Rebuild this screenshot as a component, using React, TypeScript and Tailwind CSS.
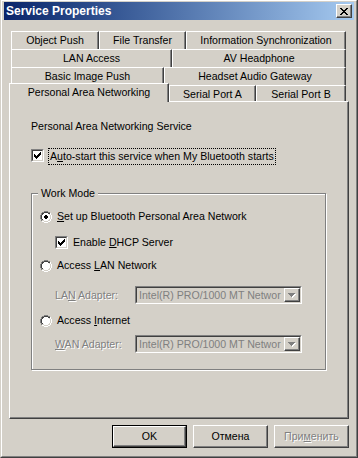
import React from "react";

function pix(pattern: string[], ch: string) {
  let d = "";
  pattern.forEach((row, y) => {
    for (let x = 0; x < row.length; x++) {
      if (row[x] === ch) d += `M${x} ${y}h1v1h-1z`;
    }
  });
  return d;
}

const CHECK = [
  "......X",
  ".....XX",
  "X...XXX",
  "XX.XXX.",
  "XXXXX..",
  ".XXX...",
  "..X....",
];

const CLOSE = [
  "XX....XX",
  ".XX..XX.",
  "..XXXX..",
  "...XX...",
  "..XXXX..",
  ".XX..XX.",
  "XX....XX",
];

const ARROW = ["XXXXXXX", ".XXXXX.", "..XXX..", "...X..."];

const RADIO = [
  "....GGGG....",
  "..GGDDDDGG..",
  ".GDDWWWWDDH.",
  ".GDWWWWWWLH.",
  "GDWWWWWWWWLH",
  "GDWWWWWWWWLH",
  "GDWWWWWWWWLH",
  "GDWWWWWWWWLH",
  ".GDWWWWWWLH.",
  ".GLLWWWWLLH.",
  "..HHLLLLHH..",
  "....HHHH....",
];

const DOT = ["....", ".XX.", "XXXX", "XXXX", ".XX."];

function Radio({ checked }: { checked?: boolean }) {
  return (
    <svg width="12" height="12" viewBox="0 0 12 12" shapeRendering="crispEdges" className="shrink-0 block">
      <path d={pix(RADIO, "G")} fill="#808080" />
      <path d={pix(RADIO, "D")} fill="#404040" />
      <path d={pix(RADIO, "W")} fill="#ffffff" />
      <path d={pix(RADIO, "L")} fill="#D4D0C8" />
      <path d={pix(RADIO, "H")} fill="#ffffff" />
      {checked && (
        <g transform="translate(4 3)">
          <path d={pix(DOT, "X")} fill="#000000" />
        </g>
      )}
    </svg>
  );
}

function CheckBox() {
  return (
    <div className="w-[13px] h-[13px] shrink-0 border border-t-[#808080] border-l-[#808080] border-r-white border-b-white">
      <div className="w-full h-full border border-t-[#404040] border-l-[#404040] border-r-[#D4D0C8] border-b-[#D4D0C8] bg-white flex items-center justify-center">
        <svg width="7" height="7" viewBox="0 0 7 7" shapeRendering="crispEdges" className="block">
          <path d={pix(CHECK, "X")} fill="#000" />
        </svg>
      </div>
    </div>
  );
}

function Tab({ className, children }: { className: string; children: React.ReactNode }) {
  return (
    <div
      className={`flex items-center justify-center bg-[#D4D0C8] border-t border-l border-r border-t-white border-l-white border-r-[#404040] shadow-[inset_-1px_0_0_#808080] whitespace-nowrap ${className}`}
    >
      {children}
    </div>
  );
}

function Combo() {
  return (
    <div className="w-[167px] h-[18px] border border-t-[#808080] border-l-[#808080] border-r-white border-b-white">
      <div className="w-full h-full border border-t-[#404040] border-l-[#404040] border-r-[#D4D0C8] border-b-[#D4D0C8] bg-[#D4D0C8] flex items-center">
        <div className="flex-1 whitespace-nowrap pl-[2px] text-[#808080] leading-[14px]">
          Intel(R) PRO/1000 MT Networ
        </div>
        <div className="w-[16px] h-[14px] shrink-0 border border-t-white border-l-white border-r-[#404040] border-b-[#404040] shadow-[inset_-1px_-1px_0_#808080] flex items-center justify-center">
          <svg width="8" height="5" viewBox="0 0 8 5" shapeRendering="crispEdges" className="block">
            <g transform="translate(1 1)">
              <path d={pix(ARROW, "X")} fill="#ffffff" />
            </g>
            <path d={pix(ARROW, "X")} fill="#808080" />
          </svg>
        </div>
      </div>
    </div>
  );
}

function Button({ children, def, disabled }: { children: React.ReactNode; def?: boolean; disabled?: boolean }) {
  const inner = (
    <div
      className={`w-full h-full flex items-center justify-center border border-t-white border-l-white border-r-[#404040] border-b-[#404040] shadow-[inset_-1px_-1px_0_#808080] ${
        disabled ? "text-[#808080] [text-shadow:1px_1px_0_#ffffff]" : "text-black"
      }`}
    >
      {children}
    </div>
  );
  if (def) {
    return <div className="w-[75px] h-[23px] border border-black">{inner}</div>;
  }
  return <div className="w-[75px] h-[23px]">{inner}</div>;
}

export default function App() {
  return (
    <div className="w-[358px] h-[458px] bg-[#D4D0C8] border-l border-r border-b border-l-[#D4D0C8] border-r-[#404040] border-b-[#404040] text-black text-[10.6px] leading-[13px] font-['Liberation_Sans',Arial,sans-serif] select-none">
      <div className="h-full border border-l-white border-t-white border-r-[#808080] border-b-[#808080] pt-[1px] px-[2px] pb-[2px] flex flex-col">
        {/* Title bar */}
        <div className="h-[18px] shrink-0 bg-linear-to-r from-[#0A246A] to-[#A6CAF0] flex items-center justify-between pl-[2px] pr-[2px]">
          <span className="text-white font-bold text-[12px] leading-[14px]">Service Properties</span>
          <div className="w-[16px] h-[14px] bg-[#D4D0C8] border border-t-white border-l-white border-r-[#404040] border-b-[#404040] shadow-[inset_-1px_-1px_0_#808080] flex items-center justify-center">
            <svg width="8" height="7" viewBox="0 0 8 7" shapeRendering="crispEdges" className="block">
              <path d={pix(CLOSE, "X")} fill="#000" />
            </svg>
          </div>
        </div>

        {/* Body */}
        <div className="flex-1 flex flex-col px-[5px] pt-[11px]">
          {/* Tabs */}
          <div className="flex h-[18px] pl-[2px]">
            <Tab className="w-[88px] h-full">Object Push</Tab>
            <Tab className="w-[87px] h-full">File Transfer</Tab>
            <Tab className="w-[160px] h-full">Information Synchronization</Tab>
          </div>
          <div className="flex h-[18px] pl-[2px]">
            <Tab className="w-[161px] h-full">LAN Access</Tab>
            <Tab className="w-[174px] h-full">AV Headphone</Tab>
          </div>
          <div className="flex h-[18px] pl-[2px]">
            <Tab className="w-[153px] h-full">Basic Image Push</Tab>
            <Tab className="w-[182px] h-full">Headset Audio Gateway</Tab>
          </div>
          <div className="flex h-[16px] items-start">
            <Tab className="w-[160px] h-[19px] -mt-[2px] relative z-10 pb-[1px]">Personal Area Networking</Tab>
            <Tab className="w-[87px] h-full pt-[2px]">Serial Port A</Tab>
            <Tab className="w-[90px] h-full pt-[2px]">Serial Port B</Tab>
          </div>

          {/* Panel */}
          <div className="h-[318px] border border-t-white border-l-white border-r-[#404040] border-b-[#404040] shadow-[inset_-1px_-1px_0_#808080] pl-[21px] flex flex-col">
            <div className="mt-[18px]">Personal Area Networking Service</div>
            <div className="mt-[15px] flex h-[17px] items-start">
              <div className="mt-[1px]">
                <CheckBox />
              </div>
              <div className="ml-[4px] border border-dotted border-black px-[1px] leading-[15px] whitespace-nowrap">
                A<u className="underline-offset-[1px]">u</u>to-start this service when My Bluetooth starts
              </div>
            </div>

            {/* Group box */}
            <div className="mt-[28px] w-[295px] h-[177px] relative border border-[#808080] shadow-[1px_1px_0_#ffffff,inset_1px_1px_0_#ffffff] pl-[8px] flex flex-col">
              <div className="absolute left-[6px] -top-[7px] px-[3px] bg-[#D4D0C8] leading-[13px]">Work Mode</div>

              <div className="mt-[16px] h-[13px] flex items-center">
                <Radio checked />
                <span className="ml-[5px] whitespace-nowrap">
                  <u>S</u>et up Bluetooth Personal Area Network
                </span>
              </div>

              <div className="mt-[13px] h-[13px] flex items-center pl-[15px]">
                <CheckBox />
                <span className="ml-[5px] whitespace-nowrap">
                  Enable <u>D</u>HCP Server
                </span>
              </div>

              <div className="mt-[10px] h-[13px] flex items-center">
                <Radio />
                <span className="ml-[5px] whitespace-nowrap">
                  Access <u>L</u>AN Network
                </span>
              </div>

              <div className="mt-[14px] h-[18px] flex items-center pl-[15px]">
                <span className="w-[80px] shrink-0 text-[#808080] [text-shadow:1px_1px_0_#ffffff] whitespace-nowrap">
                  LA<u>N</u> Adapter:
                </span>
                <Combo />
              </div>

              <div className="mt-[10px] h-[13px] flex items-center">
                <Radio />
                <span className="ml-[5px] whitespace-nowrap">
                  Access <u>I</u>nternet
                </span>
              </div>

              <div className="mt-[8px] h-[18px] flex items-center pl-[15px]">
                <span className="w-[80px] shrink-0 text-[#808080] [text-shadow:1px_1px_0_#ffffff] whitespace-nowrap">
                  <u>W</u>AN Adapter:
                </span>
                <Combo />
              </div>
            </div>
          </div>

          {/* Buttons */}
          <div className="mt-[6px] flex justify-end gap-[6px]">
            <Button def>OK</Button>
            <Button>Отмена</Button>
            <Button disabled>
              <span>
                При<u>м</u>енить
              </span>
            </Button>
          </div>
        </div>
      </div>
    </div>
  );
}
